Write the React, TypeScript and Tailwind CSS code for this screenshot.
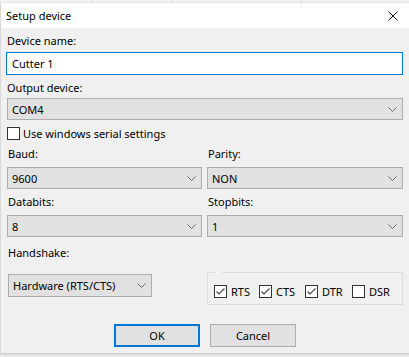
import React from "react";

function Chevron() {
  return (
    <svg width="9" height="5" viewBox="0 0 9 5" className="shrink-0">
      <polyline points="0.5,0.5 4.5,4.5 8.5,0.5" fill="none" stroke="#6d6d6d" strokeWidth="1" />
    </svg>
  );
}

function Select({ value, className = "" }: { value: string; className?: string }) {
  return (
    <div
      className={`h-[22px] bg-[#e1e1e1] border border-[#adadad] flex items-center justify-between pl-[4px] pr-[5px] ${className}`}
    >
      <span className="leading-none">{value}</span>
      <Chevron />
    </div>
  );
}

function Check({ checked }: { checked: boolean }) {
  return (
    <div className="w-[13px] h-[13px] bg-white border border-[#333333] shrink-0 flex items-center justify-center">
      {checked && (
        <svg width="11" height="11" viewBox="0 0 11 11">
          <polyline points="1.5,5.5 4,8 9.5,2.5" fill="none" stroke="#4a4a4a" strokeWidth="1.2" />
        </svg>
      )}
    </div>
  );
}

function Label({ children, className = "" }: { children: React.ReactNode; className?: string }) {
  return <div className={`h-[16px] flex items-center pl-[1px] ${className}`}>{children}</div>;
}

const flags: { t: string; c: boolean; w: string }[] = [
  { t: "RTS", c: true, w: "w-[45px]" },
  { t: "CTS", c: true, w: "w-[46px]" },
  { t: "DTR", c: true, w: "w-[47px]" },
  { t: "DSR", c: false, w: "w-[40px]" },
];

export default function App() {
  return (
    <div className="w-[409px] h-[357px] bg-[#f0f0f0] text-[11px] text-black font-['Noto_Sans',sans-serif] flex flex-col overflow-hidden">
      <div className="h-[3px] bg-[#f2f2f2] relative border-b border-[#e6e6e6]">
        <div className="absolute left-[92px] top-0 h-[3px] w-px bg-[#d6d6d6]" />
        <div className="absolute left-[172px] top-0 h-[3px] w-px bg-[#d6d6d6]" />
        <div className="absolute left-[301px] top-0 h-[3px] w-px bg-[#d6d6d6]" />
      </div>
      <div className="h-[25px] bg-white flex items-center justify-between pl-[5px] pr-[11px] border-l border-[#d9d9d9]">
        <span className="leading-none">Setup device</span>
        <svg width="10" height="10" viewBox="0 0 10 10">
          <path d="M0.5 0.5 L9.5 9.5 M9.5 0.5 L0.5 9.5" stroke="#111" strokeWidth="1" fill="none" />
        </svg>
      </div>
      <div className="flex-1 flex flex-col border-l border-[#d9d9d9] pl-[5px] pr-[6px]">
        <Label className="mt-[5px]">Device name:</Label>
        <div className="mt-[3px] h-[23px] bg-white border border-[#0078d7] flex items-center pl-[5px]">
          <span className="leading-none">Cutter 1</span>
        </div>
        <Label className="mt-[5px]">Output device:</Label>
        <Select value="COM4" className="mt-[2px] ml-[1px]" />
        <div className="mt-[5px] h-[16px] flex items-center gap-[3px] pl-[1px]">
          <Check checked={false} />
          <span className="leading-none">Use windows serial settings</span>
        </div>
        <div className="grid grid-cols-2 gap-x-[5px] mt-[5px]">
          <Label className="pl-[2px]">Baud:</Label>
          <Label>Parity:</Label>
          <Select value="9600" className="mt-[5px] ml-[1px]" />
          <Select value="NON" className="mt-[5px]" />
          <Label className="mt-[5px] pl-[2px]">Databits:</Label>
          <Label className="mt-[5px]">Stopbits:</Label>
          <Select value="8" className="mt-[5px] ml-[1px]" />
          <Select value="1" className="mt-[5px]" />
        </div>
        <Label className="mt-[8px] pl-[2px]">Handshake:</Label>
        <div className="grid grid-cols-2 gap-x-[5px] mt-[11px]">
          <div>
            <Select value="Hardware (RTS/CTS)" className="mt-[2px] ml-[2px] w-[144px] h-[23px] pl-[3px]" />
          </div>
          <div className="relative h-[33px] w-[196px] border border-[#dcdcdc] flex items-end pb-[6px] pl-[6px]">
            <div className="absolute left-[7px] -top-px w-[7px] h-px bg-[#f0f0f0]" />
            {flags.map((f) => (
              <div key={f.t} className={`flex items-center gap-[4px] h-[13px] shrink-0 ${f.w}`}>
                <Check checked={f.c} />
                <span className="leading-none">{f.t}</span>
              </div>
            ))}
          </div>
        </div>
        <div className="mt-[19px] flex gap-[10px] pl-[108px]">
          <div className="w-[86px] h-[23px] bg-[#e1e1e1] border-2 border-[#0078d7] flex items-center justify-center">
            <span className="leading-none">OK</span>
          </div>
          <div className="w-[86px] h-[23px] bg-[#e1e1e1] border border-[#adadad] flex items-center justify-center">
            <span className="leading-none">Cancel</span>
          </div>
        </div>
      </div>
      <div className="h-[4px] shrink-0 bg-gradient-to-b from-[#cccccc] to-[#f4f4f4]" />
    </div>
  );
}
